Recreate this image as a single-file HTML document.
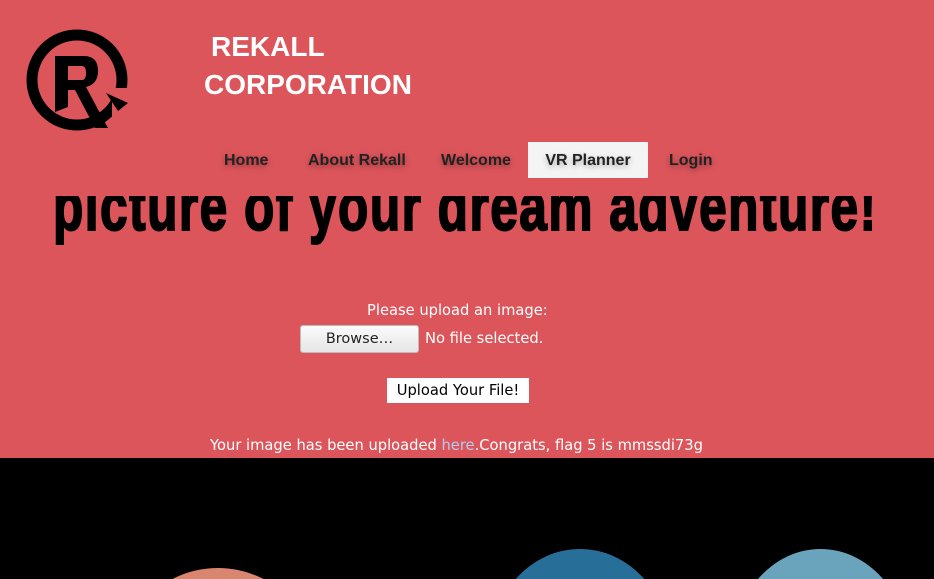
<!DOCTYPE html>
<html><head><meta charset="utf-8"><style>
*{margin:0;padding:0;box-sizing:border-box}
html,body{width:934px;height:579px;overflow:hidden}
body{background:#000;font-family:"Liberation Sans",sans-serif;position:relative}
.top{position:absolute;left:0;top:0;width:934px;height:458px;background:#db555b}
.t{position:absolute;color:#fff;font-weight:bold;font-size:28px}
.nav{position:absolute;top:142px;height:36px;font-size:16px;font-weight:bold;color:#222;line-height:37px;text-shadow:0 2px 6px rgba(0,0,0,.35)}
.bigwrap{position:absolute;left:0;top:196px;width:934px;height:50px;overflow:hidden}
.big{position:absolute;left:53px;top:-29px;font-weight:bold;font-size:68px;color:#000;-webkit-text-stroke:2px #000;transform:scaleX(.73);transform-origin:left;letter-spacing:2px;white-space:nowrap;line-height:80px}
.c{position:absolute;color:#fff;font-family:"DejaVu Sans","Liberation Sans",sans-serif;font-size:14.7px;white-space:nowrap}
.bot{position:absolute;left:0;top:458px;width:934px;height:121px;overflow:hidden;background:#000}
.circ{position:absolute;border-radius:50%}
</style></head><body>
<div class="top">
<svg style="position:absolute;left:22px;top:28px" width="110" height="108" viewBox="0 0 110 108">
<circle cx="55" cy="52" r="45" fill="none" stroke="#000" stroke-width="11"/>
<rect x="90" y="60" width="20" height="30" fill="#db555b"/>
<polygon points="84,65 106,75 96,83" fill="#000"/>
<path d="M33 28 H62 Q76 28 76 43 Q76 56 64 59 L86 100 L73 100 L53 62 H46 V79 L33 84 Z M46 38 V52 H60 Q64 52 64 45 Q64 38 60 38 Z" fill="#000" fill-rule="evenodd"/>
</svg>
<div class="t" style="left:211px;top:31px">REKALL</div>
<div class="t" style="left:204px;top:69px">CORPORATION</div>
<div class="nav" style="left:224px">Home</div>
<div class="nav" style="left:308px">About Rekall</div>
<div class="nav" style="left:441px">Welcome</div>
<div class="nav" style="left:528px;width:120px;background:#f4f4f4;text-align:center;text-shadow:0 2px 6px rgba(0,0,0,.3)">VR Planner</div>
<div class="nav" style="left:669px">Login</div>
<div class="bigwrap"><div class="big">picture of your dream adventure!</div></div>
<div class="c" style="left:367px;top:302px">Please upload an image:</div>
<div style="position:absolute;left:300px;top:325px;width:119px;height:28px;border:1px solid #bbb;border-radius:3px;background:linear-gradient(#fafafa,#e6e6e6);font-family:'DejaVu Sans',sans-serif;font-size:14.5px;color:#222;text-align:center;line-height:27px">Browse…</div>
<div class="c" style="left:425px;top:330px">No file selected.</div>
<div style="position:absolute;left:387px;top:378px;width:142px;height:25px;background:#fff;font-family:'DejaVu Sans',sans-serif;font-size:14.7px;color:#000;text-align:center;line-height:25px">Upload Your File!</div>
<div class="c" style="left:210px;top:437px">Your image has been uploaded <span style="color:#b8c8f0">here</span>.Congrats, flag 5 is mmssdi73g</div>
</div>
<div class="bot">
<div class="circ" style="left:118px;top:110px;width:200px;height:200px;background:#d98670"></div>
<div class="circ" style="left:490px;top:91px;width:180px;height:200px;background:#276e98"></div>
<div class="circ" style="left:733px;top:91px;width:175px;height:200px;background:#6aa3bc"></div>
</div>
</body></html>
